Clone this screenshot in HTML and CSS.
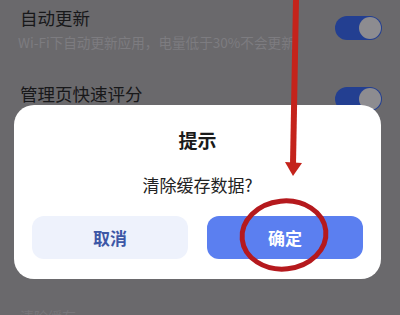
FILE: index.html
```html
<!DOCTYPE html>
<html lang="zh">
<head>
<meta charset="utf-8">
<link rel="stylesheet" href="styles.css">
</head>
<body>
<div class="screen">
  <div class="settings">
    <div class="row">
      <div class="texts">
        <div class="title">自动更新</div>
        <div class="sub">Wi-Fi下自动更新应用，电量低于30%不会更新</div>
      </div>
      <div class="toggle"><span class="knob"></span></div>
    </div>
    <div class="row row2">
      <div class="texts">
        <div class="title">管理页快速评分</div>
      </div>
      <div class="toggle"><span class="knob"></span></div>
    </div>
    <div class="row row3">
      <div class="texts">
        <div class="title faint">清除缓存</div>
      </div>
    </div>
  </div>

  <div class="dialog">
    <div class="dtitle">提示</div>
    <div class="dmsg">清除缓存数据?</div>
    <div class="btns">
      <div class="btn cancel">取消</div>
      <div class="btn ok">确定</div>
    </div>
  </div>

  <svg class="annot" width="400" height="315" viewBox="0 0 400 315">
    <path d="M296 0 L293 164" stroke="#c4231b" stroke-width="6" fill="none"/>
    <path d="M285 162 L302 163 L293 176 Z" fill="#c4231b"/>
    <ellipse cx="284" cy="235" rx="42" ry="34" fill="none" stroke="#b5191d" stroke-width="5" transform="rotate(-6 284 235)"/>
  </svg>
</div>
</body>
</html>
```
FILE: styles.css
```css
* { box-sizing: border-box; }
html, body { margin: 0; padding: 0; }
body {
  width: 400px;
  height: 315px;
  overflow: hidden;
  font-family: "Noto Sans CJK SC", "Noto Sans", sans-serif;
  background: #6a696c;
}
.screen {
  position: relative;
  width: 400px;
  height: 315px;
  background: #6a696c;
  overflow: hidden;
}
.settings {
  padding: 5px 18px 0 20px;
  display: flex;
  flex-direction: column;
}
.row {
  display: flex;
  align-items: flex-start;
  justify-content: space-between;
}
.title {
  font-size: 17.5px;
  line-height: 25px;
  color: #18181a;
}
.sub {
  margin-top: 3px;
  margin-left: -2px;
  font-size: 13.6px;
  line-height: 18px;
  color: #7d7c80;
}
.toggle {
  margin-top: 11px;
  width: 47px;
  height: 24px;
  border-radius: 12px;
  background: #233f91;
  display: flex;
  justify-content: flex-end;
  padding: 1px;
}
.knob {
  width: 22px;
  height: 22px;
  border-radius: 50%;
  background: #8d8c90;
}
.row2 { margin-top: 30px; }
.row2 .toggle { margin-top: 6px; }
.row3 { margin-top: 193px; }
.faint { color: #77767a; font-size: 14px; }

.dialog {
  position: absolute;
  left: 14px;
  top: 105px;
  width: 367px;
  height: 174px;
  background: #ffffff;
  border-radius: 20px;
  display: flex;
  flex-direction: column;
  align-items: center;
  padding-top: 22px;
}
.dtitle {
  font-size: 19px;
  line-height: 26px;
  font-weight: 700;
  color: #1a1a1a;
}
.dmsg {
  margin-top: 20px;
  font-size: 17px;
  line-height: 24px;
  color: #222222;
}
.btns {
  margin-top: 19px;
  display: flex;
  gap: 19px;
}
.btn {
  width: 156px;
  height: 43px;
  border-radius: 12px;
  display: flex;
  align-items: center;
  justify-content: center;
  font-size: 17px;
  font-weight: 700;
}
.cancel {
  background: #eef2fc;
  color: #3d57a6;
}
.ok {
  background: #5b7ff0;
  color: #ffffff;
}
.annot {
  position: absolute;
  left: 0;
  top: 0;
}
```
